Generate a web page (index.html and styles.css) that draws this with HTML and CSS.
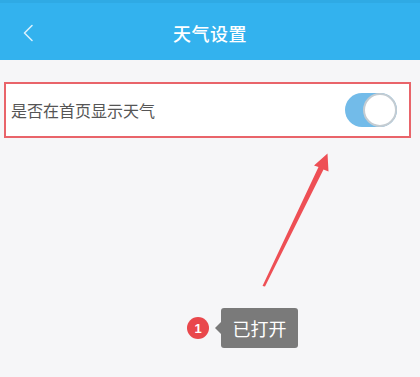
FILE: index.html
```html
<!DOCTYPE html>
<html lang="zh">
<head>
<meta charset="utf-8">
<link rel="stylesheet" href="styles.css">
</head>
<body>
<div class="page">
  <header class="bar">
    <svg class="back" width="12" height="18" viewBox="0 0 12 18"><path d="M10 1.5 L2.5 9 L10 16.5" fill="none" stroke="#d8f0fc" stroke-width="1.6" stroke-linecap="round" stroke-linejoin="round"/></svg>
    <h1 class="title">天气设置</h1>
  </header>
  <main class="content">
    <div class="row">
      <span class="label">是否在首页显示天气</span>
      <span class="switch"><span class="knob"></span></span>
    </div>
  </main>
  <svg class="arrow" width="420" height="377" viewBox="0 0 420 377">
    <polygon points="262.5,286 318.5,167 314,165.5 327.5,153.5 328.5,171.5 323.5,169.5 265,286.5" fill="#ee4f55"/>
  </svg>
  <div class="note">
    <span class="badge">1</span>
    <span class="tip">已打开</span>
  </div>
</div>
</body>
</html>
```
FILE: styles.css
```css
html, body {
  margin: 0;
  padding: 0;
}
body {
  width: 420px;
  height: 377px;
  overflow: hidden;
  background: #f6f6f8;
  font-family: "Noto Sans CJK SC", "Noto Sans", sans-serif;
}
.page {
  position: relative;
  width: 420px;
  height: 377px;
}
.bar {
  height: 60px;
  background: #33b2ee;
  border-top: 3px solid #2faae4;
  box-sizing: border-box;
  display: flex;
  align-items: center;
  justify-content: center;
  position: relative;
}
.back {
  position: absolute;
  left: 22px;
  top: 21px;
}
.title {
  margin: 0;
  margin-top: 3px;
  font-size: 18px;
  font-weight: 500;
  color: #ffffff;
  letter-spacing: 0.5px;
}
.content {
  padding: 22px 9px 0 4px;
}
.row {
  height: 56px;
  box-sizing: border-box;
  border: 2px solid #e9646a;
  background: #ffffff;
  display: flex;
  align-items: center;
  justify-content: space-between;
  padding: 0 12px 0 5px;
}
.label {
  font-size: 16px;
  color: #555555;
}
.switch {
  width: 52px;
  height: 34px;
  border-radius: 17px;
  background: #72bbe9;
  position: relative;
}
.knob {
  position: absolute;
  right: 0;
  top: 0;
  width: 34px;
  height: 34px;
  box-sizing: border-box;
  border-radius: 50%;
  background: #ffffff;
  border: 2px solid #c4ccd2;
}
.arrow {
  position: absolute;
  left: 0;
  top: 0;
}
.note {
  position: absolute;
  left: 187px;
  top: 308px;
  display: flex;
  align-items: center;
  gap: 12px;
}
.badge {
  width: 22px;
  height: 22px;
  border-radius: 50%;
  background: #e9474c;
  color: #ffffff;
  font-family: "Liberation Sans", sans-serif;
  font-size: 13px;
  font-weight: bold;
  display: flex;
  align-items: center;
  justify-content: center;
}
.tip {
  position: relative;
  width: 77px;
  height: 40px;
  border-radius: 3px;
  background: #7a7a7a;
  color: #ffffff;
  font-size: 18px;
  display: flex;
  align-items: center;
  justify-content: center;
}
.tip::before {
  content: "";
  position: absolute;
  left: -6px;
  top: 14px;
  border-style: solid;
  border-width: 6px 6px 6px 0;
  border-color: transparent #7a7a7a transparent transparent;
}
```
